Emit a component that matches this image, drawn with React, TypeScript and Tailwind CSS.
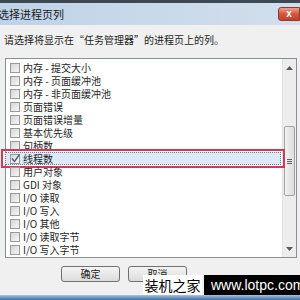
import React from 'react';

const items = [
  '内存 - 提交大小',
  '内存 - 页面缓冲池',
  '内存 - 非页面缓冲池',
  '页面错误',
  '页面错误增量',
  '基本优先级',
  '句柄数',
  '线程数',
  '用户对象',
  'GDI 对象',
  'I/O 读取',
  'I/O 写入',
  'I/O 其他',
  'I/O 读取字节',
  'I/O 写入字节',
];

const font = { fontFamily: '"Noto Sans CJK SC", "Liberation Sans", sans-serif' };

const CheckBox = ({ checked }: { checked?: boolean }) => (
  <span className="relative w-[10px] h-[10px] shrink-0 border border-[#9a9a9a] bg-gradient-to-br from-[#d6d6d6] to-[#f6f6f6]">
    {checked && (
      <svg className="absolute -left-[1px] -top-[2px]" width="11" height="11" viewBox="0 0 11 11">
        <path d="M2 5.5 L4.5 8.5 L9.5 1.5" fill="none" stroke="#4a5a78" strokeWidth="1.3" />
      </svg>
    )}
  </span>
);

const Row = ({ label, selected }: { label: string; selected?: boolean }) => (
  <div className="relative h-[13px] flex items-center">
    {selected && (
      <>
        <div className="absolute -left-[5px] -right-[3px] -top-[3px] -bottom-[3px] border-2 border-[#cf3a55]" />
        <div className="absolute left-[-1px] right-[1px] top-0 bottom-0 bg-[#dce9f8] border border-dotted border-[#6d7d96]" />
      </>
    )}
    <div className="relative flex items-center gap-[3px] pl-[4px]">
      <CheckBox checked={selected} />
      <span className="text-[10px] leading-[12px] text-[#1e1e1e] whitespace-pre" style={font}>
        {label}
      </span>
    </div>
  </div>
);

export default function App() {
  return (
    <div className="relative w-[300px] h-[300px] overflow-hidden flex flex-col bg-[#f0f0f0]" style={font}>
      <div className="h-[3px] bg-[#3e4852]" />
      <div className="h-[22px] flex items-center justify-between bg-gradient-to-r from-[#bfd2e7] via-[#c9d9ea] to-[#d2deeb]">
        <span className="-ml-[2px] text-[11px] leading-[12px] text-[#1c1c1c]">选择进程页列</span>
        <div className="w-[22px] h-[14px] rounded-l-[3px] border border-[#8a3a2e] bg-gradient-to-b from-[#e8a08e] via-[#d4563c] to-[#c4402a] flex items-center justify-center">
          <span className="text-white text-[10px] leading-none font-bold" style={{ fontFamily: '"Liberation Sans", sans-serif' }}>x</span>
        </div>
      </div>
      <div className="flex-1 flex flex-col">
        <div className="pt-[9px] pl-[4px] text-[10px] leading-[12px] text-[#1c1c1c] whitespace-nowrap">
          请选择将显示在“任务管理器”的进程页上的列。
        </div>
        <div className="mt-[12px] ml-[5px] w-[292px] h-[200px] border border-[#8a8f96] bg-white flex">
          <div className="flex-1 pt-[2px] flex flex-col">
            {items.map((it) => (
              <Row key={it} label={it} selected={it === '线程数'} />
            ))}
          </div>
          <div className="w-[14px] flex flex-col bg-[#ededed] border-l border-[#e2e2e2]">
            <div className="h-[17px] flex items-center justify-center">
              <svg width="7" height="4" viewBox="0 0 7 4"><path d="M0 4 L3.5 0 L7 4 Z" fill="#5a5a5a" /></svg>
            </div>
            <div className="h-[50px]" />
            <div className="h-[70px] mx-[1px] rounded-[2px] border border-[#a4a4a4] bg-gradient-to-r from-[#f2f2f2] to-[#dcdcdc] flex items-center justify-center">
              <div className="flex flex-col gap-[1px]">
                <div className="w-[5px] h-[1px] bg-[#606060]" />
                <div className="w-[5px] h-[1px] bg-[#606060]" />
                <div className="w-[5px] h-[1px] bg-[#606060]" />
              </div>
            </div>
            <div className="flex-1" />
            <div className="h-[17px] flex items-center justify-center">
              <svg width="7" height="4" viewBox="0 0 7 4"><path d="M0 0 L3.5 4 L7 0 Z" fill="#5a5a5a" /></svg>
            </div>
          </div>
        </div>
        <div className="mt-[8px] pl-[61px] flex gap-[8px]">
          <div className="w-[59px] h-[16px] rounded-[3px] border border-[#707070] bg-gradient-to-b from-[#f4f4f4] to-[#dcdcdc] flex items-center justify-center text-[10px] leading-none text-[#1c1c1c]">
            确定
          </div>
          <div className="w-[59px] h-[16px] rounded-[3px] border border-[#707070] bg-gradient-to-b from-[#f4f4f4] to-[#dcdcdc] flex items-center justify-center text-[10px] leading-none text-[#1c1c1c]">
            取消
          </div>
        </div>
      </div>
      <div className="h-[5px] bg-gradient-to-b from-[#a9c4e0] to-[#3a6ea8]" />
      <div className="absolute left-[143px] top-[275px] h-[20px] flex gap-[2px]">
        <div className="w-[59px] bg-white flex items-center justify-center text-[14px] leading-none text-black">装机之家</div>
        <div className="w-[96px] bg-black flex items-center pl-[7px] text-[14px] leading-none text-white whitespace-nowrap" style={{ fontFamily: '"Liberation Sans", sans-serif' }}>
          www.lotpc.com
        </div>
      </div>
    </div>
  );
}
